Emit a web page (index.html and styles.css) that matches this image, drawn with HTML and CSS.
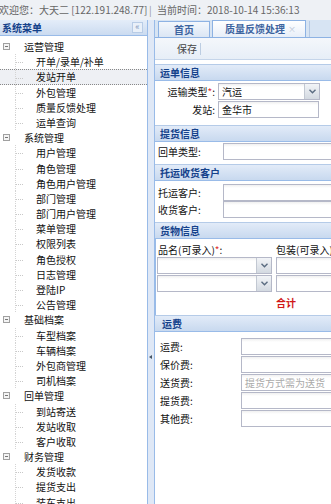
FILE: index.html
```html
<!DOCTYPE html>
<html lang="zh-CN">
<head>
<meta charset="utf-8">
<link rel="stylesheet" href="styles.css">
</head>
<body>
<div class="top">
  <span class="welcome">欢迎您：大天二 [122.191.248.77]</span>
  <span class="bar">|</span>
  <span>当前时间：2018-10-14 15:36:13</span>
</div>
<div class="main">
  <div class="left">
    <div class="lhead"><span>系统菜单</span><span class="collapse">«</span></div>
    <ul class="tree">
      <li class="grp"><i class="minus"></i>运营管理</li>
      <li class="leaf">开单/录单/补单</li>
      <li class="leaf sel">发站开单</li>
      <li class="leaf">外包管理</li>
      <li class="leaf">质量反馈处理</li>
      <li class="leaf">运单查询</li>
      <li class="grp"><i class="minus"></i>系统管理</li>
      <li class="leaf">用户管理</li>
      <li class="leaf">角色管理</li>
      <li class="leaf">角色用户管理</li>
      <li class="leaf">部门管理</li>
      <li class="leaf">部门用户管理</li>
      <li class="leaf">菜单管理</li>
      <li class="leaf">权限列表</li>
      <li class="leaf">角色授权</li>
      <li class="leaf">日志管理</li>
      <li class="leaf">登陆IP</li>
      <li class="leaf">公告管理</li>
      <li class="grp"><i class="minus"></i>基础档案</li>
      <li class="leaf">车型档案</li>
      <li class="leaf">车辆档案</li>
      <li class="leaf">外包商管理</li>
      <li class="leaf">司机档案</li>
      <li class="grp"><i class="minus"></i>回单管理</li>
      <li class="leaf">到站寄送</li>
      <li class="leaf">发站收取</li>
      <li class="leaf">客户收取</li>
      <li class="grp"><i class="minus"></i>财务管理</li>
      <li class="leaf">发货收款</li>
      <li class="leaf">提货支出</li>
      <li class="leaf">装车支出</li>
    </ul>
  </div>
  <div class="split"><span class="sarrow"></span></div>
  <div class="right">
    <div class="tabs">
      <div class="tab">首页</div>
      <div class="tab active">质量反馈处理<span class="close">×</span></div>
      <div class="tabedge"></div>
    </div>
    <div class="toolbar">
      <span class="btn">保存</span><span class="tsep"></span>
    </div>
    <div class="form">
      <div class="shead s1">运单信息</div>
      <div class="sbody b1">
        <div class="row"><label class="lab1">运输类型<em>*</em>:</label><div class="combo w1"><span class="val">汽运</span><span class="arrow"><svg width="7" height="5" viewBox="0 0 7 5"><polyline points="0.5,0.8 3.5,3.8 6.5,0.8" fill="none" stroke="#5a6b80" stroke-width="1.4"/></svg></span></div></div>
        <div class="row"><label class="lab1">发站:</label><div class="inp w1b">金华市</div></div>
      </div>
      <div class="shead s2">提货信息</div>
      <div class="sbody b2">
        <div class="row"><label class="lab2">回单类型:</label><div class="inp grow"></div></div>
      </div>
      <div class="shead s3">托运收货客户</div>
      <div class="sbody b3">
        <div class="row"><label class="lab2">托运客户:</label><div class="inp grow"></div></div>
        <div class="row"><label class="lab2">收货客户:</label><div class="inp grow"></div></div>
      </div>
      <div class="shead s4">货物信息</div>
      <div class="goods">
        <div class="grow2 heads"><span class="gcol1">品名(可录入)<em>*</em>:</span><span class="gcol2">包装(可录入)<em>*</em></span></div>
        <div class="grow2"><div class="combo gw"><span class="val"></span><span class="arrow"><svg width="7" height="5" viewBox="0 0 7 5"><polyline points="0.5,0.8 3.5,3.8 6.5,0.8" fill="none" stroke="#5a6b80" stroke-width="1.4"/></svg></span></div><div class="inp gw2"></div></div>
        <div class="grow2"><div class="combo gw"><span class="val"></span><span class="arrow"><svg width="7" height="5" viewBox="0 0 7 5"><polyline points="0.5,0.8 3.5,3.8 6.5,0.8" fill="none" stroke="#5a6b80" stroke-width="1.4"/></svg></span></div><div class="inp gw2"></div></div>
        <div class="total">合计</div>
      </div>
      <div class="shead s5">运费</div>
      <div class="fees">
        <div class="frow"><label class="lab3">运费:</label><div class="inp grow"></div></div>
        <div class="frow"><label class="lab3">保价费:</label><div class="inp grow"></div></div>
        <div class="frow"><label class="lab3">送货费:</label><div class="inp grow ph">提货方式需为送货</div></div>
        <div class="frow"><label class="lab3">提货费:</label><div class="inp grow"></div></div>
        <div class="frow"><label class="lab3">其他费:</label><div class="inp grow"></div></div>
      </div>
    </div>
  </div>
</div>
</body>
</html>
```
FILE: styles.css
```css
* { box-sizing: border-box; margin: 0; padding: 0; }
html, body { width: 331px; height: 504px; overflow: hidden; }
body {
  font-family: "Noto Sans CJK SC", "Liberation Sans", sans-serif;
  font-size: 10px;
  color: #111;
  background: #fff;
}
em { color: #e03030; font-style: normal; }

.top {
  height: 20px;
  line-height: 20px;
  background: #eef1f5;
  color: #666;
  display: flex;
  white-space: nowrap;
  overflow: hidden;
}
.top .welcome { width: 150px; margin-left: -1px; flex: none; }
.top .bar { width: 8px; flex: none; color: #999; }

.main { display: flex; height: 484px; }

.left {
  width: 148px;
  flex: none;
  border-right: 1px solid #99bbe8;
  display: flex;
  flex-direction: column;
  overflow: hidden;
}
.lhead {
  height: 18px;
  background: linear-gradient(#e4edf9, #cbdbf0);
  border-bottom: 1px solid #99bbe8;
  color: #15428b;
  font-weight: bold;
  padding-left: 2px;
  display: flex;
  justify-content: space-between;
  align-items: center;
}
.collapse {
  width: 11px;
  height: 11px;
  margin-right: 4px;
  background: #e9f0f9;
  border: 1px solid #b8cce6;
  color: #7a93b8;
  font-size: 9px;
  line-height: 8px;
  text-align: center;
  font-weight: normal;
}
.tree { list-style: none; padding-top: 3px; }
.tree li {
  height: 15.2px;
  line-height: 15.2px;
  white-space: nowrap;
  position: relative;
  display: flex;
  align-items: center;
}
.tree .grp { padding-left: 3px; }
.tree .leaf { padding-left: 36px; }
.minus {
  width: 7px;
  height: 7px;
  border: 1px solid #a0a0a0;
  margin-right: 14px;
  position: relative;
  background: #f4f4f4;
}
.minus::after {
  content: "";
  position: absolute;
  left: 1px;
  top: 2px;
  width: 3px;
  height: 1px;
  background: #777;
}
.tree .leaf::before {
  content: "";
  position: absolute;
  left: 15px;
  top: 0;
  height: 8px;
  width: 7px;
  border-left: 1px dotted #d4d4d4;
  border-bottom: 1px dotted #c8c8c8;
}
.tree .leaf::after {
  content: "";
  position: absolute;
  left: 15px;
  top: 8px;
  height: 7px;
  border-left: 1px dotted #d4d4d4;
}
.tree .sel {
  background: #eef0f4;
  border-top: 1px dotted #888;
  border-bottom: 1px dotted #888;
}

.split {
  width: 6px;
  flex: none;
  background: #dfe8f6;
  position: relative;
}
.sarrow {
  position: absolute;
  left: 1px;
  top: 335px;
  width: 0;
  height: 0;
  border-top: 2px solid transparent;
  border-bottom: 2px solid transparent;
  border-right: 3px solid #445566;
}

.right {
  flex: 1;
  min-width: 0;
  border-left: 1px solid #99bbe8;
  overflow: hidden;
  display: flex;
  flex-direction: column;
}
.tabs {
  height: 18px;
  flex: none;
  background: #d7e4f3;
  border-bottom: 1px solid #8db2e3;
  display: flex;
  align-items: flex-end;
  padding-left: 3px;
  gap: 2px;
}
.tab {
  height: 16px;
  line-height: 15px;
  width: 52px;
  flex: none;
  border: 1px solid #8db2e3;
  border-bottom: none;
  background: linear-gradient(#f3f7fc, #dbe6f4);
  color: #3d64a0;
  font-weight: bold;
  text-align: center;
  position: relative;
}
.tab.active {
  width: 94px;
  background: linear-gradient(#ffffff, #e8eff9);
  height: 17px;
  padding-right: 8px;
}
.close {
  position: absolute;
  right: 9px;
  top: 0;
  font-size: 8px;
  color: #b8c4d4;
  font-weight: normal;
}
.tabedge {
  width: 20px;
  height: 16px;
  flex: none;
  border-left: 1px solid #b5c9e4;
  margin-left: 1px;
}
.toolbar {
  height: 22px;
  flex: none;
  background: linear-gradient(#f4f7fb, #e7eef7);
  border-bottom: 1px solid #c5d5ea;
  display: flex;
  align-items: center;
  padding-left: 22px;
  color: #444;
}
.btn { width: 22px; }
.tsep {
  width: 1px;
  height: 12px;
  background: #bccde2;
  margin-left: 1px;
}

.form { flex: 1; padding-top: 4px; }
.shead {
  height: 17px;
  line-height: 16px;
  background: linear-gradient(#e2ebf8, #c8d9ef);
  border-top: 1px solid #b5cbe8;
  border-bottom: 1px solid #99bbe8;
  color: #15428b;
  font-weight: bold;
  padding-left: 5px;
  white-space: nowrap;
}
.s2 { margin-top: 7px; }
.s3 { margin-top: 4px; }
.s4 { margin-top: 4px; }
.s5 { padding-left: 7px; }

.sbody { display: flex; flex-direction: column; gap: 1px; }
.b1 { padding-top: 2px; }
.b2 { padding-top: 1px; }
.b3 { padding-top: 3px; gap: 0; }
.row { display: flex; height: 17px; align-items: center; white-space: nowrap; }
.lab1 { width: 63px; flex: none; text-align: right; padding-right: 3px; }
.lab2 { width: 68px; flex: none; padding-left: 3px; }
.lab3 { width: 86px; flex: none; padding-left: 5px; }

.inp {
  height: 17px;
  line-height: 15px;
  border: 1px solid #b5b8c8;
  background: linear-gradient(#f0f0f0, #fff 3px);
  padding-left: 3px;
  white-space: nowrap;
  overflow: hidden;
}
.grow { flex: 1; min-width: 0; margin-right: -20px; }
.w1b { width: 101px; flex: none; }
.ph { color: #aaa; }

.combo {
  height: 17px;
  border: 1px solid #b5b8c8;
  background: linear-gradient(#f0f0f0, #fff 3px);
  display: flex;
  flex: none;
}
.combo .val { flex: 1; padding-left: 3px; line-height: 15px; }
.arrow {
  width: 15px;
  flex: none;
  background: linear-gradient(#f2f4f7, #d3d9e1);
  border-left: 1px solid #c2c8d2;
  display: flex;
  align-items: center;
  justify-content: center;
}
.w1 { width: 102px; }

.goods {
  border-left: 1px solid #99bbe8;
  height: 76px;
  padding-top: 3px;
}
.grow2 { display: flex; align-items: center; height: 17px; white-space: nowrap; }
.grow2 + .grow2 { margin-top: 1px; }
.heads { height: 14px; margin-bottom: 1px; }
.gcol1 { width: 120px; padding-left: 2px; flex: none; }
.gcol2 { flex: none; }
.gw { width: 115px; margin-left: 1px; }
.gw2 { width: 80px; flex: none; margin-left: 4px; }
.total {
  padding-left: 120px;
  color: #d01818;
  font-weight: bold;
  height: 17px;
  line-height: 17px;
  margin-top: 2px;
}

.fees { padding-top: 6px; display: flex; flex-direction: column; gap: 1px; }
.frow { display: flex; height: 17px; align-items: center; white-space: nowrap; }
```
